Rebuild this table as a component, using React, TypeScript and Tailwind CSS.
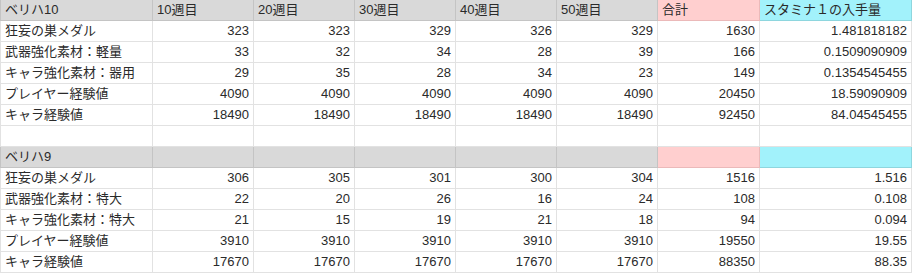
type Row = {
  label: string;
  values: string[];
  total: string;
  rate: string;
  header?: boolean;
};

const rows: Row[] = [
  { label: 'ベリハ10', values: ['10週目', '20週目', '30週目', '40週目', '50週目'], total: '合計', rate: 'スタミナ１の入手量', header: true },
  { label: '狂妄の巣メダル', values: ['323', '323', '329', '326', '329'], total: '1630', rate: '1.481818182' },
  { label: '武器強化素材：軽量', values: ['33', '32', '34', '28', '39'], total: '166', rate: '0.1509090909' },
  { label: 'キャラ強化素材：器用', values: ['29', '35', '28', '34', '23'], total: '149', rate: '0.1354545455' },
  { label: 'プレイヤー経験値', values: ['4090', '4090', '4090', '4090', '4090'], total: '20450', rate: '18.59090909' },
  { label: 'キャラ経験値', values: ['18490', '18490', '18490', '18490', '18490'], total: '92450', rate: '84.04545455' },
  { label: '', values: ['', '', '', '', ''], total: '', rate: '' },
  { label: 'ベリハ9', values: ['', '', '', '', ''], total: '', rate: '', header: true },
  { label: '狂妄の巣メダル', values: ['306', '305', '301', '300', '304'], total: '1516', rate: '1.516' },
  { label: '武器強化素材：特大', values: ['22', '20', '26', '16', '24'], total: '108', rate: '0.108' },
  { label: 'キャラ強化素材：特大', values: ['21', '15', '19', '21', '18'], total: '94', rate: '0.094' },
  { label: 'プレイヤー経験値', values: ['3910', '3910', '3910', '3910', '3910'], total: '19550', rate: '19.55' },
  { label: 'キャラ経験値', values: ['17670', '17670', '17670', '17670', '17670'], total: '88350', rate: '88.35' },
];

const base = 'h-[21px] border-b border-r px-[4px] flex items-end pb-[2px] whitespace-nowrap overflow-hidden leading-[16px]';

export default function App() {
  return (
    <div
      className="w-[912px] h-[273px] bg-white text-[13px] text-[#2a2a2a] overflow-hidden"
      style={{ fontFamily: '"Liberation Sans", Arial, "Noto Sans CJK JP", sans-serif' }}
    >
      <div className="grid grid-cols-[153px_101px_101px_101px_101px_101px_102px_152px]">
        {rows.map((row, i) => {
          const h = row.header;
          const cell = h
            ? `${base} bg-[#d9d9d9] border-[#c4c4c4] justify-start`
            : `${base} bg-white border-[#e2e2e2] justify-end`;
          return [
            <div
              key={`${i}-l`}
              className={`${base} border-l justify-start ${
                h ? 'bg-[#d9d9d9] border-[#c4c4c4]' : 'bg-white border-[#e2e2e2]'
              }`}
            >
              {row.label}
            </div>,
            ...row.values.map((v, j) => (
              <div key={`${i}-${j}`} className={cell}>
                {v}
              </div>
            )),
            <div
              key={`${i}-t`}
              className={`${base} ${
                h ? 'bg-[#ffcfcf] border-[#ebb9b9] justify-start' : 'bg-white border-[#e2e2e2] justify-end'
              }`}
            >
              {row.total}
            </div>,
            <div
              key={`${i}-r`}
              className={`${base} ${
                h ? 'bg-[#a2f2fb] border-[#8ed6de] justify-start' : 'bg-white border-[#e2e2e2] justify-end'
              }`}
            >
              {row.rate}
            </div>,
          ];
        })}
      </div>
    </div>
  );
}
